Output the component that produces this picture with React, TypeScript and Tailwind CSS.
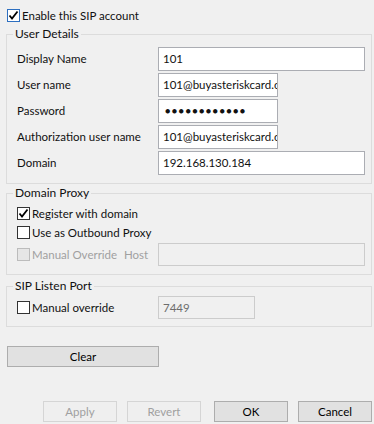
import type { ReactNode } from 'react';

const font = { fontFamily: 'Lato, "Liberation Sans", sans-serif' };

const Check = ({ checked = false, disabled = false, focus = false }: { checked?: boolean; disabled?: boolean; focus?: boolean }) => (
  <div
    className={`w-[13px] h-[13px] shrink-0 border flex items-center justify-center ${
      disabled ? 'bg-[#e6e6e6] border-[#bcbcbc]' : focus ? 'bg-white border-[#2d6fc0]' : 'bg-white border-[#333333]'
    }`}
  >
    {checked && (
      <svg width="11" height="11" viewBox="0 0 11 11">
        <path d="M1.5 5.5 L4 8.5 L9.5 1.5" fill="none" stroke="#000" strokeWidth="1.8" />
      </svg>
    )}
  </div>
);

const Field = ({ value, width, disabled = false, height = 'h-[24px]' }: { value: string; width: string; disabled?: boolean; height?: string }) => (
  <div
    className={`${width} ${height} border flex items-center pl-[4px] overflow-hidden whitespace-nowrap ${
      disabled ? 'bg-[#f0f0f0] border-[#cccccc] text-[#6d6d6d]' : 'bg-white border-[#abadb3]'
    }`}
  >
    {value}
  </div>
);

const Group = ({ title, className, children }: { title: string; className: string; children: ReactNode }) => (
  <fieldset className={`ml-[6px] w-[366px] border border-[#dcdcdc] px-0 ${className}`}>
    <legend className="ml-[6px] px-[2px] leading-[14px] text-[12px]">{title}</legend>
    {children}
  </fieldset>
);

const Btn = ({ label, className, disabled = false }: { label: string; className: string; disabled?: boolean }) => (
  <div
    className={`h-[21px] border flex items-center justify-center ${
      disabled ? 'border-[#d5d5d5] bg-[#efefef] text-[#a0a0a0]' : 'border-[#adadad] bg-[#e1e1e1] text-black'
    } ${className}`}
  >
    {label}
  </div>
);

const rows = [
  { label: 'Display Name', value: '101', w: 'w-[207px]' },
  { label: 'User name', value: '101@buyasteriskcard.com', w: 'w-[120px]' },
  { label: 'Password', value: '●●●●●●●●●●●●', w: 'w-[120px]', pw: true },
  { label: 'Authorization user name', value: '101@buyasteriskcard.com', w: 'w-[120px]' },
  { label: 'Domain', value: '192.168.130.184', w: 'w-[207px]' },
];

export default function App() {
  return (
    <div className="w-[374px] h-[424px] bg-[#f0f0f0] text-[11.5px] text-[#111] flex flex-col overflow-hidden" style={font}>
      <div className="h-[27px] pt-[9px] pl-[7px] flex items-start">
        <Check checked focus />
        <span className="ml-[2px] leading-[13px]">Enable this SIP account</span>
      </div>

      <Group title="User Details" className="pt-[6px] pb-[8px]">
        <div className="flex flex-col gap-[2px]">
          {rows.map((r) => (
            <div key={r.label} className="flex items-center h-[24px] pl-[10px]">
              <span className="w-[141px]">{r.label}</span>
              {r.pw ? (
                <div className={`${r.w} h-[24px] border bg-white border-[#abadb3] flex items-center pl-[6px] text-[9px] tracking-[1.4px]`}>
                  {r.value}
                </div>
              ) : (
                <Field value={r.value} width={r.w} />
              )}
            </div>
          ))}
        </div>
      </Group>

      <Group title="Domain Proxy" className="mt-[2px] pb-[8px]">
        <div className="pl-[10px] flex flex-col">
          <div className="flex items-center h-[13px] mt-[7px]">
            <Check checked />
            <span className="ml-[2px]">Register with domain</span>
          </div>
          <div className="flex items-center h-[13px] mt-[6px]">
            <Check />
            <span className="ml-[2px]">Use as Outbound Proxy</span>
          </div>
          <div className="flex items-center h-[23px] mt-[4px]">
            <div className="w-[107px] flex items-center">
              <Check disabled />
              <span className="ml-[2px] text-[#a0a0a0]">Manual Override</span>
            </div>
            <span className="w-[34px] text-[#a0a0a0]">Host</span>
            <Field value="" width="w-[207px]" height="h-[23px]" disabled />
          </div>
        </div>
      </Group>

      <Group title="SIP Listen Port" className="mt-[4px] pt-[3px] pb-[7px]">
        <div className="pl-[10px] flex items-center h-[23px]">
          <div className="w-[141px] flex items-center">
            <Check />
            <span className="ml-[2px]">Manual override</span>
          </div>
          <Field value="7449" width="w-[97px]" height="h-[23px]" disabled />
        </div>
      </Group>

      <Btn label="Clear" className="ml-[7px] mt-[19px] w-[152px]" />

      <div className="flex mt-[34px]">
        <Btn label="Apply" className="ml-[43px] w-[74px]" disabled />
        <Btn label="Revert" className="ml-[10px] w-[74px]" disabled />
        <Btn label="OK" className="ml-[13px] w-[74px]" />
        <Btn label="Cancel" className="ml-[10px] w-[74px]" />
      </div>
    </div>
  );
}
